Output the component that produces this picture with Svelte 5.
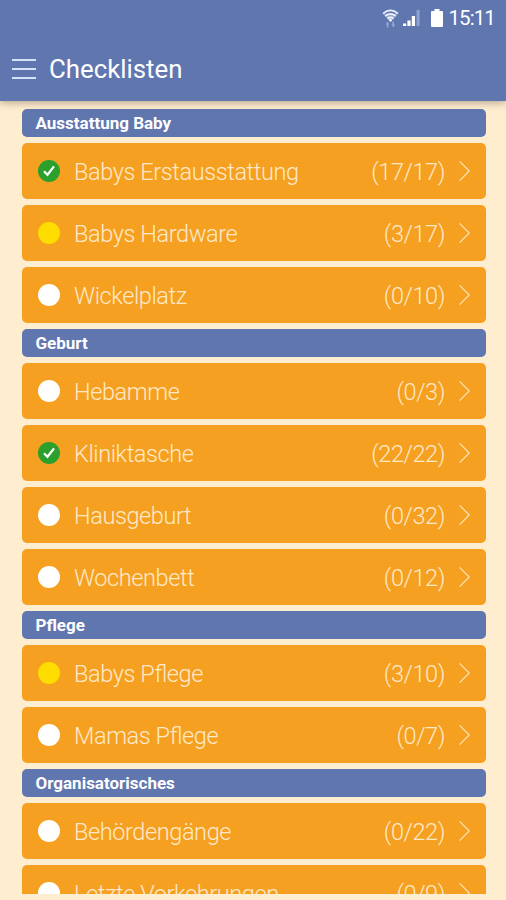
<script lang="ts">
    type Item = { name: string; done: number; total: number }
    type Section = { title: string; items: Item[] }

    const sections: Section[] = [
        {
            title: 'Ausstattung Baby',
            items: [
                { name: 'Babys Erstausstattung', done: 17, total: 17 },
                { name: 'Babys Hardware', done: 3, total: 17 },
                { name: 'Wickelplatz', done: 0, total: 10 }
            ]
        },
        {
            title: 'Geburt',
            items: [
                { name: 'Hebamme', done: 0, total: 3 },
                { name: 'Kliniktasche', done: 22, total: 22 },
                { name: 'Hausgeburt', done: 0, total: 32 },
                { name: 'Wochenbett', done: 0, total: 12 }
            ]
        },
        {
            title: 'Pflege',
            items: [
                { name: 'Babys Pflege', done: 3, total: 10 },
                { name: 'Mamas Pflege', done: 0, total: 7 }
            ]
        },
        {
            title: 'Organisatorisches',
            items: [
                { name: 'Behördengänge', done: 0, total: 22 },
                { name: 'Letzte Vorkehrungen', done: 0, total: 9 }
            ]
        }
    ]

    const status = ({ done, total }: Item) =>
        done === total ? 'complete' : done > 0 ? 'started' : 'open'
</script>

<div class="screen">
    <header>
        <div class="status-bar">
            <svg class="wifi" width="17" height="19" viewBox="0 0 17 19">
                <g fill="none" stroke="#e8effc" stroke-width="1.7">
                    <path d="M1 4.6Q8.5 -1.8 16 4.6" />
                    <path d="M3.2 7.2Q8.5 2.6 13.8 7.2" />
                    <path d="M5.4 9.7Q8.5 7.2 11.6 9.7" />
                </g>
                <path d="M1 4.6L8.5 13L16 4.6" fill="#fff" opacity="0.35" />
                <path d="M6.6 10.8Q8.5 9.4 10.4 10.8L8.5 13Z" fill="#fff" />
                <path
                    d="M3.6 15.4L5.6 12.6L7.2 15.4H6.4V18.5H4.8V15.4ZM9.4 15.4H10.4V12.6H12V15.4H13L11.2 18.5Z"
                    fill="#93a9dc"
                />
            </svg>
            <svg class="signal" width="17" height="18" viewBox="0 0 17 18">
                <path d="M0 14.5h3.2V17H0zM4.4 11.5h3.2V17H4.4zM8.8 7H12v10H8.8z" fill="#fff" />
                <path d="M13.6 1h3v16h-3z" fill="#8fa2d0" />
            </svg>
            <svg class="battery" width="12" height="18" viewBox="0 0 12 18">
                <path
                    d="M3.5 0h5v2H11a1 1 0 0 1 1 1v14a1 1 0 0 1-1 1H1a1 1 0 0 1-1-1V3a1 1 0 0 1 1-1h2.5z"
                    fill="#fff"
                />
            </svg>
            <span class="clock">15:11</span>
        </div>
        <div class="title-bar">
            <button class="menu" aria-label="Menü">
                <span></span>
                <span></span>
                <span></span>
            </button>
            <h1>Checklisten</h1>
        </div>
    </header>

    <main>
        {#each sections as section (section.title)}
            <h2>{section.title}</h2>
            {#each section.items as item (item.name)}
                <div class="row">
                    <span class="dot {status(item)}">
                        {#if status(item) === 'complete'}
                            <svg width="22" height="22" viewBox="0 0 22 22">
                                <path
                                    d="M6 11.2L9.5 14.8L16 6.4"
                                    fill="none"
                                    stroke="#fff"
                                    stroke-width="2.3"
                                />
                            </svg>
                        {/if}
                    </span>
                    <span class="name">{item.name}</span>
                    <span class="count">({item.done}/{item.total})</span>
                    <svg class="chevron" width="12" height="22" viewBox="0 0 12 22">
                        <path
                            d="M0.6 1.4L10.2 11L0.6 20.6"
                            fill="none"
                            stroke="#ffe0ad"
                            stroke-width="1.3"
                        />
                    </svg>
                </div>
            {/each}
        {/each}
    </main>
</div>

<style>
    :global(body) {
        background: #feedcf;
    }

    .screen {
        display: flex;
        flex-direction: column;
        box-sizing: border-box;
        height: 900px;
        padding-bottom: 6px;
        overflow: hidden;
        background: #feedcf;
        font-family: Roboto, 'Liberation Sans', sans-serif;
    }

    header {
        flex: none;
        height: 101px;
        background: #6076af;
        box-shadow: 0 1px 8px rgba(80, 70, 60, 0.5);
        color: #fff;
        z-index: 1;
    }

    .status-bar {
        display: flex;
        align-items: center;
        justify-content: flex-end;
        height: 36px;
        padding-right: 11px;
    }

    .wifi {
        margin-right: 4px;
    }

    .signal {
        margin-right: 11px;
    }

    .battery {
        margin-right: 5px;
    }

    .clock {
        font-size: 20.5px;
        letter-spacing: -0.9px;
        line-height: 36px;
    }

    .title-bar {
        display: flex;
        align-items: center;
        height: 65px;
        padding-left: 12px;
    }

    .menu {
        display: flex;
        flex-direction: column;
        gap: 7px;
        width: 24px;
        margin: 0 13px 0 0;
        padding: 0;
        border: 0;
        background: none;
    }

    .menu span {
        height: 2px;
        background: #d5e2f7;
    }

    h1 {
        margin: 0;
        font-size: 25.8px;
        font-weight: 400;
        line-height: 66px;
    }

    main {
        display: flex;
        flex: 1;
        flex-direction: column;
        gap: 6px;
        min-height: 0;
        padding: 8px 20px 0 22px;
        overflow: hidden;
    }

    h2 {
        flex: none;
        height: 28px;
        margin: 0;
        padding-left: 13.5px;
        border-radius: 5px;
        background: #6076af;
        color: #fff;
        font-size: 17px;
        font-weight: 700;
        line-height: 29px;
    }

    .row {
        display: flex;
        flex: none;
        align-items: center;
        box-sizing: border-box;
        height: 56px;
        padding: 0 15px 0 16px;
        border-radius: 5px;
        background: #f5a021;
        color: #ffe9c8;
        font-size: 23.5px;
        font-weight: 350;
        letter-spacing: -0.4px;
        /* letter-spacing turns ligatures off, keep the one in "Pflege" */
        font-feature-settings: 'liga' 1;
    }

    .dot {
        flex: none;
        width: 22px;
        height: 22px;
        margin-right: 14px;
        border-radius: 50%;
        background: #fff;
    }

    .dot svg {
        display: block;
    }

    .dot.started {
        background: #ffdc00;
    }

    .dot.complete {
        background: #2ca02c;
    }

    .name {
        flex: 1;
        line-height: 56px;
        padding-top: 1px;
    }

    .count {
        margin-right: 14px;
        padding-top: 1px;
    }
</style>
